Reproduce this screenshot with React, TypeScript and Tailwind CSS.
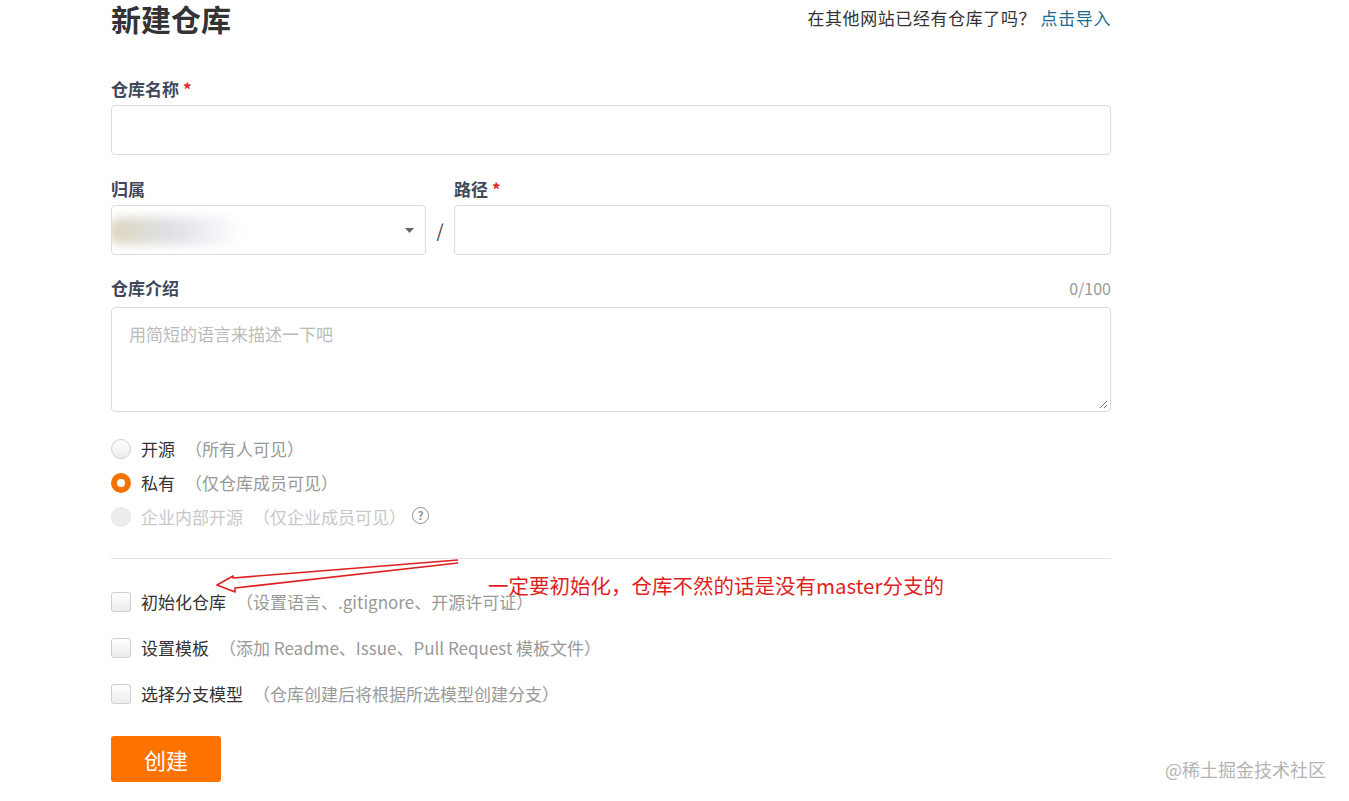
import React from "react";

const font = { fontFamily: '"Microsoft YaHei", "Noto Sans CJK SC", "Noto Sans", sans-serif' };

function Radio({ state }: { state: "off" | "on" | "disabled" }) {
  if (state === "on") {
    return (
      <span className="flex h-5 w-5 items-center justify-center rounded-full bg-[#f57100]">
        <span className="h-2 w-2 rounded-full bg-white" />
      </span>
    );
  }
  if (state === "disabled") {
    return <span className="h-5 w-5 rounded-full border border-[#e6e6e6] bg-[#ececec]" />;
  }
  return <span className="h-5 w-5 rounded-full border border-[#cfcfcf] bg-gradient-to-b from-white to-[#ececec]" />;
}

function Checkbox() {
  return <span className="h-5 w-5 rounded-[3px] border border-[#cfcfcf] bg-gradient-to-b from-white to-[#ececec]" />;
}

function Label({ children, required }: { children: React.ReactNode; required?: boolean }) {
  return (
    <div className="flex h-6 items-center text-[17px] font-bold text-[#40485b]">
      {children}
      {required && <span className="ml-1 text-[#db2828]">*</span>}
    </div>
  );
}

export default function App() {
  return (
    <div className="relative h-[801px] w-full overflow-hidden bg-white text-[#333]" style={font}>
      <div className="ml-[111px] w-[1000px]">
        {/* header */}
        <div className="flex h-9 items-center justify-between">
          <h1 className="text-[30px] font-bold leading-[30px] text-[#333]">新建仓库</h1>
          <div className="text-[17px] tracking-[0.6px] text-[#333]">
            在其他网站已经有仓库了吗？ <span className="text-[#1b6c8f]">点击导入</span>
          </div>
        </div>

        {/* name */}
        <div className="mt-[41px]">
          <Label required>仓库名称</Label>
          <div className="mt-1 h-[50px] rounded-[4px] border border-[#dcdcdc]" />
        </div>

        {/* owner + path */}
        <div className="mt-[22px] flex items-end">
          <div className="w-[315px]">
            <Label>归属</Label>
            <div className="relative mt-1 flex h-[50px] items-center overflow-hidden rounded-[4px] border border-[#dcdcdc]">
              <div className="absolute left-[-4px] top-[11px] h-[28px] w-[135px] rounded-full bg-gradient-to-r from-[#ddd5bf] via-[#dfe2e8] to-transparent blur-[5px]" />
              <svg className="absolute right-[11px] top-[22px]" width="9" height="6" viewBox="0 0 9 6">
                <path d="M0 0 L9 0 L4.5 5 Z" fill="#666" />
              </svg>
            </div>
          </div>
          <div className="flex h-[50px] w-[28px] items-center justify-center text-[18px] text-[#333]">/</div>
          <div className="flex-1">
            <Label required>路径</Label>
            <div className="mt-1 h-[50px] rounded-[4px] border border-[#dcdcdc]" />
          </div>
        </div>

        {/* description */}
        <div className="mt-[21px]">
          <div className="flex items-center justify-between">
            <Label>仓库介绍</Label>
            <span className="text-[16px] text-[#999]">0/100</span>
          </div>
          <div className="relative mt-[7px] h-[105px] rounded-[4px] border border-[#dcdcdc] px-[17px] pt-[13px] text-[17px] text-[#bbb]">
            用简短的语言来描述一下吧
            <svg className="absolute bottom-[2px] right-[2px]" width="10" height="10" viewBox="0 0 10 10">
              <path d="M9 2 L2 9 M9 6 L6 9" stroke="#777" strokeWidth="1" />
            </svg>
          </div>
        </div>

        {/* visibility */}
        <div className="mt-5 text-[17px]">
          <div className="flex h-[34px] items-center gap-[10px]">
            <Radio state="off" />
            <span className="text-[#333]">开源</span>
            <span className="text-[#999]">（所有人可见）</span>
          </div>
          <div className="flex h-[34px] items-center gap-[10px]">
            <Radio state="on" />
            <span className="text-[#333]">私有</span>
            <span className="text-[#999]">（仅仓库成员可见）</span>
          </div>
          <div className="flex h-[34px] items-center gap-[10px]">
            <Radio state="disabled" />
            <span className="text-[#c8c8c8]">企业内部开源</span>
            <span className="text-[#c8c8c8]">（仅企业成员可见）</span>
            <span className="-ml-1 mb-[4px] flex h-[17px] w-[17px] items-center justify-center rounded-full border-[1.5px] border-[#8a8f99] text-[11px] font-bold text-[#8a8f99]">
              ?
            </span>
          </div>
        </div>

        <div className="mt-6 h-px bg-[#e3e3e3]" />

        {/* options */}
        <div className="mt-5 text-[17px]">
          <div className="flex h-[46px] items-center gap-[10px]">
            <Checkbox />
            <span className="text-[#333]">初始化仓库</span>
            <span className="text-[#999]">（设置语言、.gitignore、开源许可证）</span>
          </div>
          <div className="flex h-[46px] items-center gap-[10px]">
            <Checkbox />
            <span className="text-[#333]">设置模板</span>
            <span className="text-[#999]">（添加 Readme、Issue、Pull Request 模板文件）</span>
          </div>
          <div className="flex h-[46px] items-center gap-[10px]">
            <Checkbox />
            <span className="text-[#333]">选择分支模型</span>
            <span className="text-[#999]">（仓库创建后将根据所选模型创建分支）</span>
          </div>
        </div>

        <button className="mt-[19px] flex h-[46px] w-[110px] items-center justify-center rounded-[3px] bg-[#fe7300] text-[22px] text-white">
          创建
        </button>
      </div>

      {/* annotation */}
      <svg className="absolute left-0 top-0" width="1349" height="801">
        <path
          d="M458 560 L233 578 L233 576 L217 585 L235 592 L235 588 L458 563"
          fill="none"
          stroke="#e01f1f"
          strokeWidth="1.6"
          strokeLinejoin="round"
        />
      </svg>
      <div className="absolute left-[488px] top-[571px] text-[20.5px] leading-7 text-[#e01f1f]">
        一定要初始化，仓库不然的话是没有master分支的
      </div>

      <div className="absolute right-[23px] top-[756px] text-[18px] text-[#b4b4b4]">@稀土掘金技术社区</div>
    </div>
  );
}
